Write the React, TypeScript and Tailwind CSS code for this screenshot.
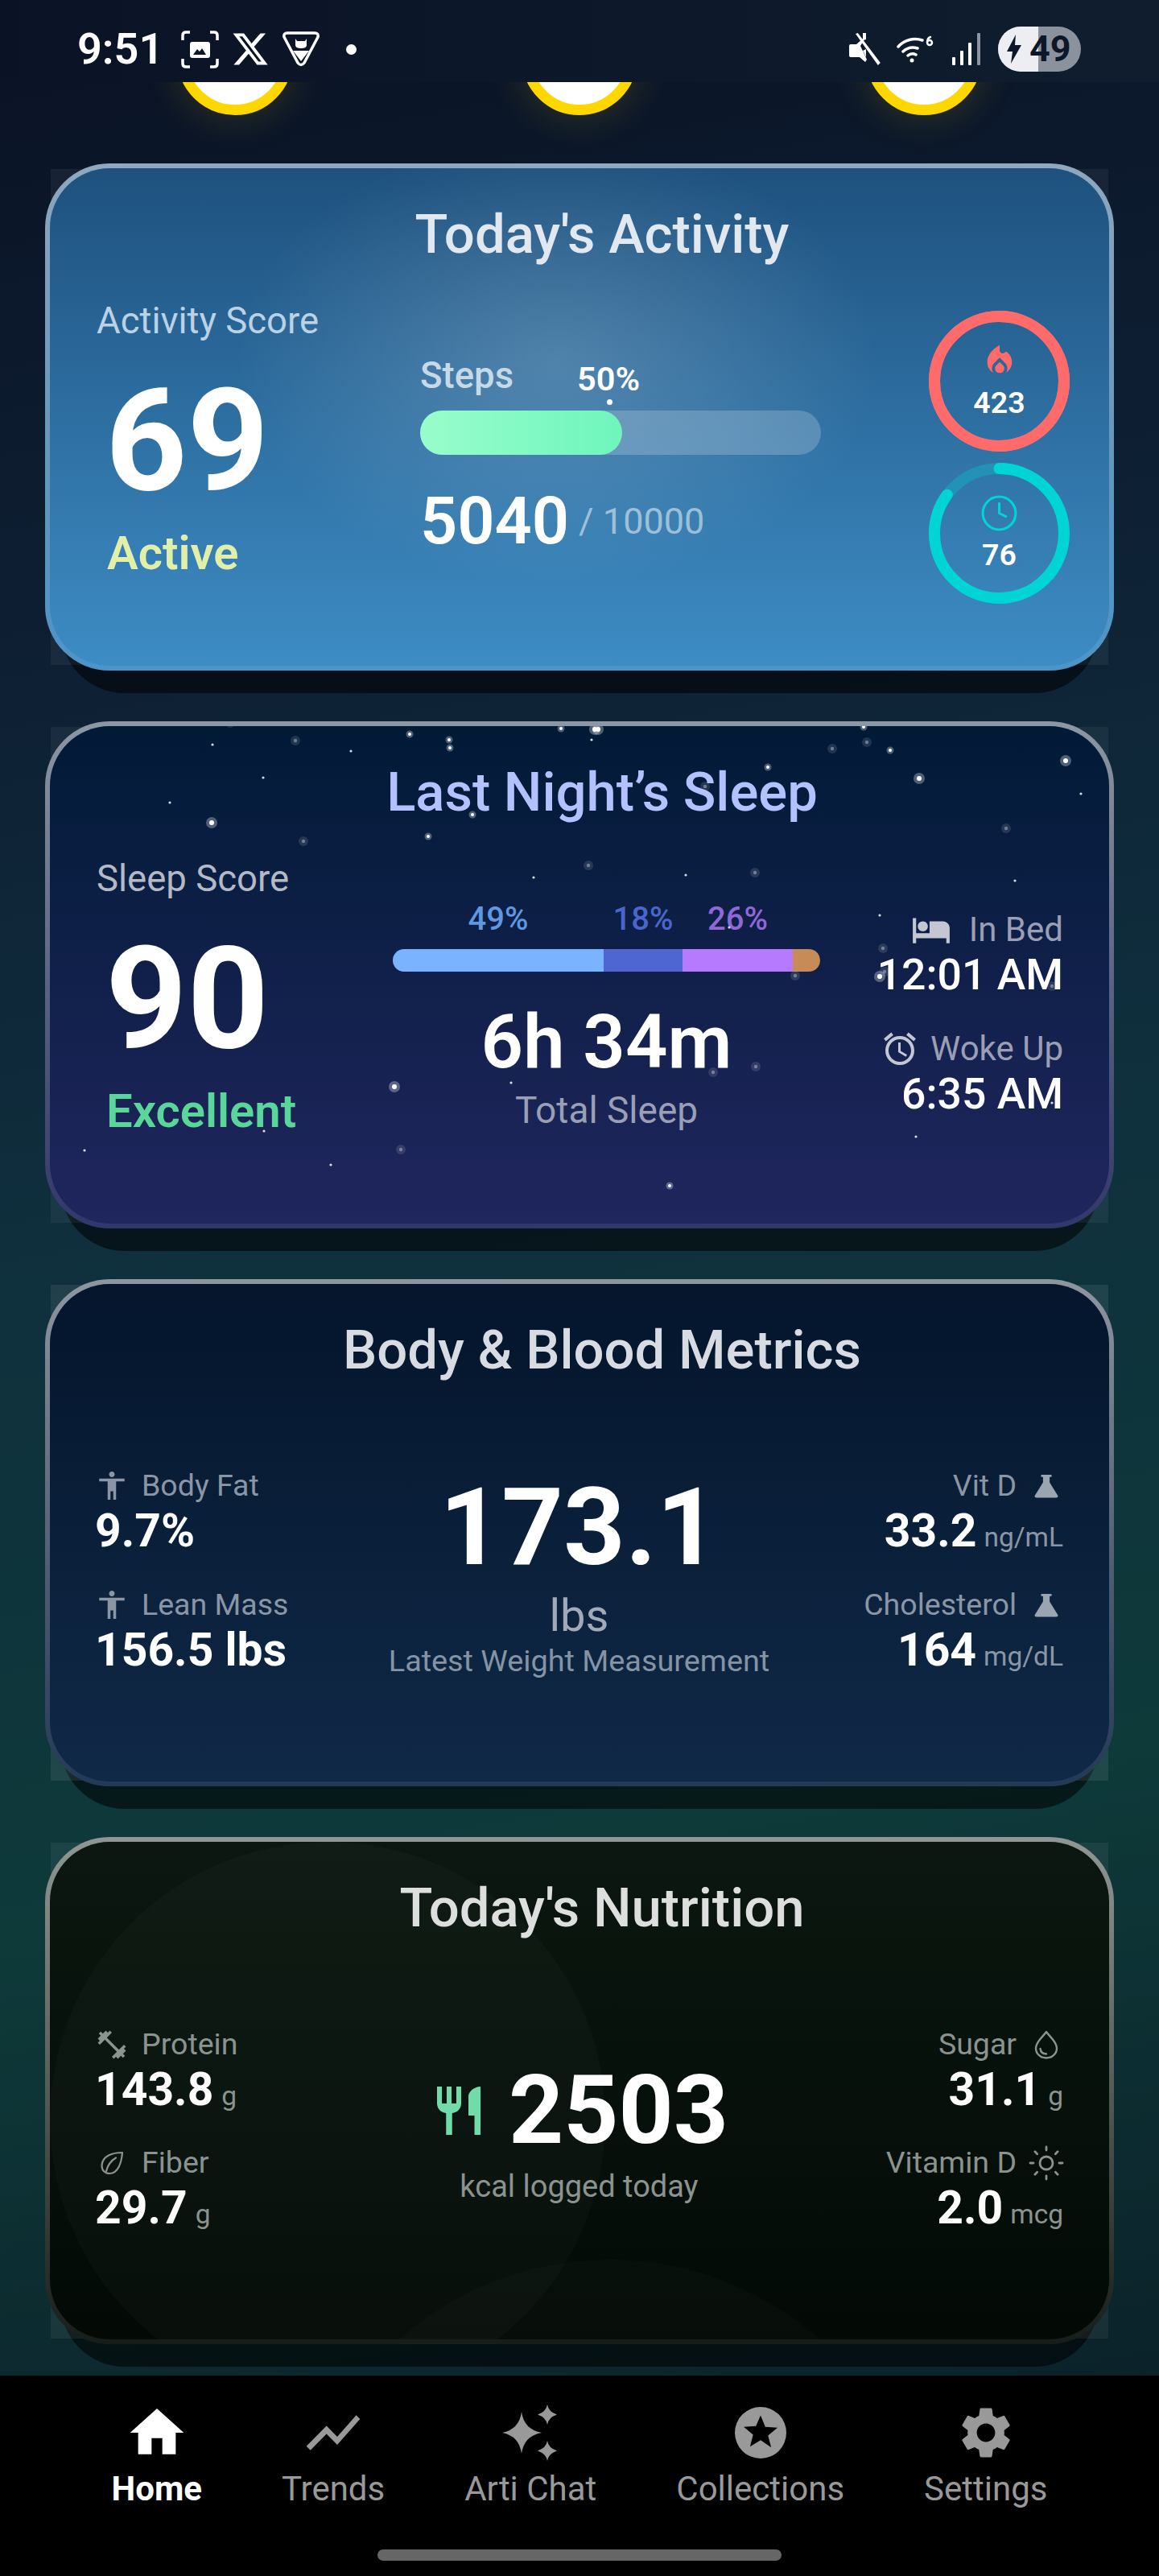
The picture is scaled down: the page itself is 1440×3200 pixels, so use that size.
import type { ReactNode } from "react";
import { Clock, Sun } from "lucide-react";
import { FaXTwitter } from "react-icons/fa6";
import {
  MdAccessibility,
  MdFitnessCenter,
  MdHome,
  MdHotel,
  MdLocalFireDepartment,
  MdOutlineAlarm,
  MdRestaurant,
  MdSettings,
  MdShowChart,
} from "react-icons/md";

// star positions read off the sleep card, in page pixels
type Star = [number, number, "s" | "m" | "l" | "d"];
const STARS: Star[] = [
  [286, 898, "d"], [367, 920, "d"], [509, 912, "m"], [558, 919, "m"], [559, 929, "m"], [697, 905, "m"],
  [735, 919, "s"], [739, 906, "l"], [264, 925, "s"], [436, 933, "s"], [327, 966, "s"], [211, 997, "s"],
  [263, 1022, "l"], [587, 1012, "m"], [532, 1039, "m"], [377, 1045, "d"], [731, 1075, "d"], [663, 1090, "s"],
  [490, 1350, "l"], [635, 1345, "s"], [328, 1405, "s"], [105, 1429, "s"], [411, 1447, "s"], [498, 1428, "d"],
  [743, 906, "l"], [1073, 903, "m"], [1177, 899, "s"], [1034, 930, "d"], [1077, 922, "d"], [1106, 932, "m"],
  [954, 953, "m"], [1142, 967, "l"], [1324, 945, "l"], [1343, 986, "s"], [876, 977, "d"], [1250, 1029, "d"],
  [852, 1087, "s"], [938, 1084, "d"], [1261, 1094, "s"], [1093, 1137, "s"], [1097, 1178, "d"], [906, 1152, "s"],
  [1093, 1213, "l"], [1099, 1207, "d"], [988, 1212, "d"], [1307, 1225, "d"], [886, 1332, "d"], [939, 1325, "d"],
  [1138, 1412, "s"], [832, 1473, "m"], [1307, 1370, "s"],
];

function SleepStars() {
  return (
    <svg className="absolute left-[-6px] top-[-6px] h-[630px] w-[1328px]" viewBox="0 0 1328 630">
      {STARS.map(([x, y, kind], i) => {
        const cx = x - 56;
        const cy = y - 896;
        if (kind === "s") return <circle key={i} cx={cx} cy={cy} r={1.6} fill="#fff" opacity={0.85} />;
        if (kind === "d")
          return (
            <g key={i}>
              <circle cx={cx} cy={cy} r={6} fill="#fff" opacity={0.12} />
              <circle cx={cx} cy={cy} r={2.2} fill="#fff" opacity={0.35} />
            </g>
          );
        const halo = kind === "l" ? 7 : 4.5;
        const core = kind === "l" ? 3 : 2;
        return (
          <g key={i}>
            <circle cx={cx} cy={cy} r={halo} fill="#fff" opacity={0.3} />
            <circle cx={cx} cy={cy} r={core} fill="#fff" />
          </g>
        );
      })}
    </svg>
  );
}

function Card({
  outer,
  inner,
  title,
  titleColor,
  corner,
  children,
}: {
  outer: string;
  inner: string;
  title: string;
  titleColor: string;
  corner: string;
  children: ReactNode;
}) {
  return (
    <div className="relative h-[630px]">
      <div className="absolute inset-x-[19px] top-[28px] bottom-[-28px] rounded-[80px] bg-black/55" />
      <div className={`absolute inset-[7px] ${corner}`} />
      <div className={`relative h-full rounded-[80px] p-[6px] ${outer}`}>
        <div className={`relative h-full rounded-[74px] overflow-hidden ${inner}`}>
          <h2 className={`relative pt-[42px] pl-[56px] text-center text-[67px] leading-[80px] font-medium ${titleColor}`}>
            {title}
          </h2>
          {children}
        </div>
      </div>
    </div>
  );
}

function Score({ label, labelColor, value, status, statusClass }: { label: string; labelColor: string; value: string; status: string; statusClass: string }) {
  return (
    <div className="flex flex-col pt-[41px]">
      <div className={`text-[45.5px] leading-[54px] ${labelColor}`}>{label}</div>
      <div className="ml-[11px] mt-[32px] text-[177px] leading-[180px] font-bold text-white">{value}</div>
      <div className={`mt-[13px] text-[58px] leading-[72px] font-semibold ${statusClass}`}>{status}</div>
    </div>
  );
}

function Ring({ color, track, progress, icon, value }: { color: string; track: string; progress: number; icon: ReactNode; value: string }) {
  const r = 80.5;
  const c = 2 * Math.PI * r;
  return (
    <div className="relative flex size-[175px] flex-col items-center pt-[40px]">
      <svg className="absolute inset-0" width={175} height={175} viewBox="0 0 175 175">
        <circle cx={87.5} cy={87.5} r={r} fill="none" stroke={track} strokeWidth={14} />
        <circle
          cx={87.5}
          cy={87.5}
          r={r}
          fill="none"
          stroke={color}
          strokeWidth={14}
          strokeLinecap="round"
          strokeDasharray={`${c * progress} ${c}`}
          transform="rotate(-90 87.5 87.5)"
        />
      </svg>
      <div className="flex h-[44px] items-center justify-center">{icon}</div>
      <div className="mt-[8px] text-[37.5px] leading-[45px] font-semibold text-white">{value}</div>
    </div>
  );
}

function ActivityBody() {
  return (
    <div className="flex pl-[58px]">
      <div className="w-[402px]">
        <Score label="Activity Score" labelColor="text-[#b9d2e6]" value="69" status="Active" statusClass="ml-[13px] text-[#e2efa9]" />
      </div>
      <div className="w-[498px] pt-[109px]">
        <div className="flex">
          <span className="text-[45.5px] leading-[54px] font-medium text-[#c6d9e6]">Steps</span>
          <span className="ml-[79px] mt-[4px] text-[41.5px] leading-[54px] font-semibold text-white">50%</span>
        </div>
        <div className="relative mt-[12px] h-[55px] rounded-full bg-white/20">
          <div className="h-full w-[251px] rounded-full bg-[linear-gradient(90deg,#98fdcb,#6ff5bd)]" />
          <div className="absolute left-[232px] top-[-14px] size-[7px] rounded-full bg-white" />
        </div>
        <div className="mt-[34px] flex items-center">
          <span className="text-[81px] leading-[98px] font-semibold text-white">5040</span>
          <span className="ml-[12px] text-[45px] leading-[98px] text-white/50">/ 10000</span>
        </div>
      </div>
      <div className="ml-[134px] flex flex-col gap-[14px] pt-[55px]">
        <Ring color="#ff6b6b" track="#ff6b6b" progress={1} value="423" icon={<MdLocalFireDepartment size={46} color="#ff6b6b" />} />
        <Ring color="#00d4d4" track="rgba(0,212,212,0.3)" progress={0.85} value="76" icon={<Clock size={49} color="#00d4d4" strokeWidth={1.5} />} />
      </div>
    </div>
  );
}

const SLEEP_STAGES = [
  { pct: "49%", width: "w-[262px]", bar: "bg-[#7ab3ff]", text: "text-[#5f97e0]" },
  { pct: "18%", width: "w-[98px]", bar: "bg-[#4d66d1]", text: "text-[#4a66cc]" },
  { pct: "26%", width: "w-[137px]", bar: "bg-[#b57aff]", text: "text-[#8f68d8]" },
  { pct: "", width: "w-[34px]", bar: "bg-[#c68b56]", text: "" },
];

function SleepBody() {
  return (
    <div className="flex pl-[58px] pr-[57px]">
      <div className="w-[368px]">
        <Score label="Sleep Score" labelColor="text-[#b4b9c6]" value="90" status="Excellent" statusClass="ml-[12px] text-[#5ad69a]" />
      </div>
      <div className="w-[531px] pt-[94px]">
        <div className="flex">
          {SLEEP_STAGES.map((s) => (
            <div key={s.bar} className={`text-center text-[40px] leading-[48px] font-medium ${s.width} ${s.text}`}>
              {s.pct}
            </div>
          ))}
        </div>
        <div className="mt-[13px] flex h-[28px] overflow-hidden rounded-full">
          {SLEEP_STAGES.map((s) => (
            <div key={s.bar} className={`h-full ${s.width} ${s.bar}`} />
          ))}
        </div>
        <div className="mt-[32px] text-center text-[92px] leading-[112px] font-semibold text-white">6h 34m</div>
        <div className="mt-[1px] text-center text-[46px] leading-[54px] text-[#9a9fb5]">Total Sleep</div>
      </div>
      <div className="flex flex-1 flex-col items-end pt-[104px]">
        <div className="flex h-[54px] items-center gap-[22px] text-[42px] leading-[54px] text-[#9a9fb5]">
          <MdHotel size={50} color="#c2c7d2" />
          <span>In Bed</span>
        </div>
        <div className="-mt-[2px] text-[53.5px] leading-[62px] font-medium text-white">12:01 AM</div>
        <div className="mt-[34px] flex h-[54px] items-center gap-[14px] text-[42px] leading-[54px] text-[#9a9fb5]">
          <MdOutlineAlarm size={48} color="#c2c7d2" />
          <span>Woke Up</span>
        </div>
        <div className="-mt-[2px] text-[53.5px] leading-[62px] font-medium text-white">6:35 AM</div>
      </div>
    </div>
  );
}

function MetricLeft({ icon, label, value, unit, color, className = "" }: { icon: ReactNode; label: string; value: string; unit?: string; color: string; className?: string }) {
  return (
    <div className={`flex flex-col items-start ${className}`}>
      <div className={`flex h-[45px] items-center text-[37.5px] leading-[45px] ${color}`}>
        <span className="mr-[16px] flex w-[42px] justify-center">{icon}</span>
        {label}
      </div>
      <div className="flex h-[68px] items-baseline gap-[10px]">
        <span className="text-[57px] leading-[68px] font-bold text-white">{value}</span>
        {unit && <span className={`text-[33.5px] ${color}`}>{unit}</span>}
      </div>
    </div>
  );
}

function MetricRight({ icon, label, value, unit, color, className = "" }: { icon: ReactNode; label: string; value: string; unit: string; color: string; className?: string }) {
  return (
    <div className={`flex flex-col items-end ${className}`}>
      <div className={`mr-[6px] flex h-[45px] items-center text-[37.5px] leading-[45px] ${color}`}>
        {label}
        <span className="ml-[22px] flex w-[30px] justify-center">{icon}</span>
      </div>
      <div className="flex h-[68px] items-baseline gap-[9px]">
        <span className="text-[57px] leading-[68px] font-bold text-white">{value}</span>
        <span className={`text-[33.5px] ${color}`}>{unit}</span>
      </div>
    </div>
  );
}

function Flask() {
  return (
    <svg width={30} height={30} viewBox="0 0 30 30" fill="#9aa5b1">
      <path d="M8.5 1h13v2.800h-2.400v6.700L29 26.500q1.600 2.900-1.800 2.900H2.800Q-.6 29.400 1 26.500L10.900 10.500V3.800H8.500z" />
    </svg>
  );
}

function Leaf() {
  return (
    <svg width={30} height={30} viewBox="0 0 30 30" fill="none" stroke="#8b9390" strokeWidth={2.2} strokeLinecap="round" strokeLinejoin="round">
      <path d="M28 2C16 2 3 6 2.500 18c-.2 6 4 10 9.500 10C23 28 27 14 28 2z" />
      <path d="M8 25C10 17 14 12 20 8.500" />
    </svg>
  );
}

function Drop() {
  return (
    <svg width={30} height={36} viewBox="0 0 30 36" fill="none" stroke="#8b9390" strokeWidth={2.4} strokeLinecap="round" strokeLinejoin="round">
      <path d="M15 2C11 8 2 14 2 22.500a13 12 0 0026 0C28 14 19 8 15 2z" />
      <path d="M7.500 23c.5 4 3.500 6.500 7.500 6.500" />
    </svg>
  );
}

function BodyMetrics() {
  const c = "text-[#8a96a6]";
  return (
    <div className="grid grid-cols-[1fr_auto_1fr] pl-[56px] pr-[57px]">
      <div className="pt-[106px]">
        <MetricLeft color={c} icon={<MdAccessibility size={43} color="#8a96a6" />} label="Body Fat" value="9.7%" />
        <MetricLeft color={c} className="mt-[35px]" icon={<MdAccessibility size={43} color="#8a96a6" />} label="Lean Mass" value="156.5 lbs" />
      </div>
      <div className="flex flex-col items-center pt-[101px]">
        <div className="text-[134px] leading-[160px] font-bold text-white">173.1</div>
        <div className="-mt-[4px] text-[56px] leading-[66px] text-[#a0aab8]">lbs</div>
        <div className="mt-[1px] text-[37.8px] leading-[45px] text-[#8493a5]">Latest Weight Measurement</div>
      </div>
      <div className="pt-[106px]">
        <MetricRight color={c} icon={<Flask />} label="Vit D" value="33.2" unit="ng/mL" />
        <MetricRight color={c} className="mt-[35px]" icon={<Flask />} label="Cholesterol" value="164" unit="mg/dL" />
      </div>
    </div>
  );
}

function NutritionBody() {
  const c = "text-[#8b9390]";
  return (
    <div className="grid grid-cols-[1fr_auto_1fr] pl-[56px] pr-[57px]">
      <div className="pt-[107px]">
        <MetricLeft color={c} icon={<MdFitnessCenter size={42} color="#8b9390" />} label="Protein" value="143.8" unit="g" />
        <MetricLeft color={c} className="mt-[34px]" icon={<Leaf />} label="Fiber" value="29.7" unit="g" />
      </div>
      <div className="flex flex-col items-center pt-[141px]">
        <div className="flex items-center gap-[26px]">
          <MdRestaurant size={72} color="#6fdcaa" />
          <span className="text-[119px] leading-[142px] font-bold text-white">2503</span>
        </div>
        <div className="mt-[1px] text-[38px] leading-[45px] text-[#8b9390]">kcal logged today</div>
      </div>
      <div className="pt-[107px]">
        <MetricRight color={c} icon={<Drop />} label="Sugar" value="31.1" unit="g" />
        <MetricRight color={c} className="mt-[34px]" icon={<Sun size={48} color="#8b9390" strokeWidth={1.4} className="shrink-0" />} label="Vitamin D" value="2.0" unit="mcg" />
      </div>
    </div>
  );
}

function StatusBar() {
  return (
    <div className="relative z-10 flex h-[102px] items-center justify-between bg-[linear-gradient(90deg,#0a1325,#0f1d2e)] pl-[96px] pr-[97px] pt-[20px] text-white">
      <div className="flex items-center">
        <span className="text-[54px] leading-[60px] font-semibold">9:51</span>
        <svg className="ml-[22px]" width={47} height={47} viewBox="0 0 47 47" fill="none" stroke="#fff" strokeWidth={3.5}>
          <path d="M2 12V6q0-4 4-4h5M36 2h5q4 0 4 4v6M45 35v6q0 4-4 4h-5M11 45H6q-4 0-4-4v-6" />
          <rect x={11} y={14} width={25} height={20} rx={3} fill="#fff" stroke="none" />
          <path d="M15 30l5-7 3 3 3-4 5 8z" fill="#0c1729" stroke="none" />
        </svg>
        <FaXTwitter className="ml-[15px]" size={48} color="#fff" />
        <svg className="ml-[16px]" width={46} height={44} viewBox="0 0 46 44" fill="none" stroke="#fff" strokeWidth={3.5} strokeLinejoin="round">
          <path d="M6 2h34q5 0 4 5L27 39q-4 5-8 0L2 7Q1 2 6 2z" />
          <path d="M16 9l2 3h10l2-3v8q0 4-7 4t-7-4zM13 24h20l-10 13z" fill="#fff" stroke="none" />
        </svg>
        <div className="ml-[33px] size-[13px] rounded-full bg-white" />
      </div>
      <div className="flex items-center">
        <svg width={42} height={40} viewBox="0 0 42 40" fill="#fff">
          <path d="M3 14h7l8-7 2 1-5 8 8 17-2 3-7-6H3a2 2 0 01-2-2V16a2 2 0 012-2z" />
          <path d="M18 0h4v8l-4 1zM22 20v10l-4-8z" />
          <path d="M9 1l2.800-1 28 37-3 3z" />
        </svg>
        <svg className="ml-[18px]" width={46} height={34} viewBox="0 0 46 34" fill="none" stroke="#fff" strokeWidth={3.5} strokeLinecap="round">
          <path d="M2 14a28 28 0 0130-8M8 20a18 18 0 0118-4M14 25a9 9 0 0110-1" />
          <circle cx={19} cy={31} r={2.5} fill="#fff" stroke="none" />
          <path d="M42 2c-3 1-4 4-4 7a3 3 0 106 0 3 3 0 00-6 0" strokeWidth={2.5} />
        </svg>
        <svg className="ml-[23px]" width={36} height={40} viewBox="0 0 36 40">
          <rect x={0} y={30} width={4} height={10} rx={1} fill="#fff" />
          <rect x={10} y={22} width={4} height={18} rx={1} fill="#fff" />
          <rect x={20} y={12} width={4} height={28} rx={1} fill="#fff" />
          <rect x={31} y={0} width={4} height={40} rx={1} fill="#8d94a0" />
        </svg>
        <div className="relative ml-[21px] flex h-[56px] w-[103px] items-center overflow-hidden rounded-full bg-[#8c929d]">
          <div className="absolute inset-y-0 left-0 w-[50px] bg-[#eceef1]" />
          <svg className="relative ml-[11px]" width={18} height={36} viewBox="0 0 18 36" fill="#0c1729">
            <path d="M11 0L0 21h7L5 36 18 13h-8z" />
          </svg>
          <span className="relative ml-[10px] text-[45px] leading-[56px] font-bold text-[#0c1729]">49</span>
        </div>
      </div>
    </div>
  );
}

function SunRow() {
  return (
    <div className="flex h-[101px] justify-center gap-[284px]">
      {[0, 1, 2].map((i) => (
        <div
          key={i}
          className="-mt-[103px] size-[144px] shrink-0 rounded-full border-[13px] border-[#ffd700] bg-white shadow-[0_0_50px_rgba(255,215,0,0.18)]"
        />
      ))}
    </div>
  );
}

function Sparkles() {
  return (
    <svg width={70} height={70} viewBox="0 0 70 70" fill="#999">
      <path d="M24 9q3 22 25 26Q27 39 24 61 21 39 0 35 21 31 24 9z" />
      <path d="M56 0q1.500 9 12 12.500Q57.500 16 56 25 54.500 16 44 12.500 54.500 9 56 0z" />
      <path d="M56 45q1.500 9 12 12.500Q57.500 61 56 70 54.500 61 44 57.500 54.500 54 56 45z" />
    </svg>
  );
}

function StarBadge() {
  return (
    <svg width={66} height={66} viewBox="0 0 66 66">
      <path
        fillRule="evenodd"
        fill="#999"
        d="M33 1a32 32 0 100 64 32 32 0 000-64zM33 11.500l5.800 14.200 15.200 1-11.700 9.800 3.800 14.800L33 42.300l-13.100 8 3.800-14.800L12 25.700l15.200-1z"
      />
    </svg>
  );
}

const NAV_ITEMS = [
  { label: "Home", icon: <MdHome size={80} color="#fff" />, active: true },
  { label: "Trends", icon: <MdShowChart size={80} color="#999" />, active: false },
  { label: "Arti Chat", icon: <Sparkles />, active: false },
  { label: "Collections", icon: <StarBadge />, active: false },
  { label: "Settings", icon: <MdSettings size={76} color="#999" />, active: false },
];

function BottomNav() {
  return (
    <nav className="mt-auto flex h-[249px] flex-col items-center bg-black pt-[31px]">
      <div className="flex justify-center gap-[99px]">
        {NAV_ITEMS.map((item) => (
          <div key={item.label} className="flex flex-col items-center">
            <div className="flex h-[80px] items-center justify-center">{item.icon}</div>
            <span className={`mt-[6px] text-[42px] leading-[48px] ${item.active ? "font-bold text-white" : "text-[#999]"}`}>
              {item.label}
            </span>
          </div>
        ))}
      </div>
      <div className="mt-[51px] h-[14px] w-[502px] rounded-full bg-[#666]" />
    </nav>
  );
}

export default function App() {
  return (
    <div className="flex h-[3200px] w-[1440px] flex-col overflow-hidden bg-[linear-gradient(170deg,#0a1224_0%,#0e2034_25%,#0f2f3d_45%,#0e3a3a_70%,#0a1a24_100%)] font-[family-name:Roboto,sans-serif]">
      <StatusBar />
      <SunRow />
      <div className="flex flex-col gap-[63px] px-[56px]">
        <Card
          title="Today's Activity"
          titleColor="text-[#e2e8f0]"
          corner="bg-white/[0.05]"
          outer="bg-[linear-gradient(180deg,rgba(255,255,255,0.5),rgba(255,255,255,0.08)),linear-gradient(180deg,#1e517e,#3d8cc4)]"
          inner="bg-[radial-gradient(ellipse_400px_280px_at_630px_240px,rgba(255,255,255,0.18),transparent),linear-gradient(180deg,#1e517e,#3d8cc4)]"
        >
          <ActivityBody />
        </Card>
        <Card
          title="Last Night’s Sleep"
          titleColor="text-[#b3c1ff]"
          corner="bg-white/[0.05]"
          outer="bg-[linear-gradient(180deg,rgba(255,255,255,0.55),rgba(255,255,255,0.08)),linear-gradient(180deg,#011a36,#20265e)]"
          inner="bg-[linear-gradient(180deg,#011a36,#20265e)]"
        >
          <SleepBody />
          <SleepStars />
        </Card>
        <Card
          title="Body & Blood Metrics"
          titleColor="text-[#d8dce2]"
          corner="bg-white/[0.08]"
          outer="bg-[linear-gradient(180deg,rgba(255,255,255,0.55),rgba(255,255,255,0.08)),linear-gradient(180deg,#04152c,#102947)]"
          inner="bg-[linear-gradient(180deg,#04152c,#102947)]"
        >
          <BodyMetrics />
        </Card>
        <Card
          title="Today's Nutrition"
          titleColor="text-[#dcdfde]"
          corner="bg-white/[0.06]"
          outer="bg-[linear-gradient(180deg,rgba(255,255,255,0.55),rgba(255,255,255,0.08)),linear-gradient(180deg,#0b1710,#030a05)]"
          inner="bg-[linear-gradient(180deg,#0b1710,#030a05)]"
        >
          <div className="absolute left-[0px] top-[0px] size-[690px] rounded-full bg-white/[0.025]" />
          <div className="absolute left-[300px] top-[519px] size-[790px] rounded-full bg-white/[0.02]" />
          <div className="relative">
            <NutritionBody />
          </div>
        </Card>
      </div>
      <BottomNav />
    </div>
  );
}
